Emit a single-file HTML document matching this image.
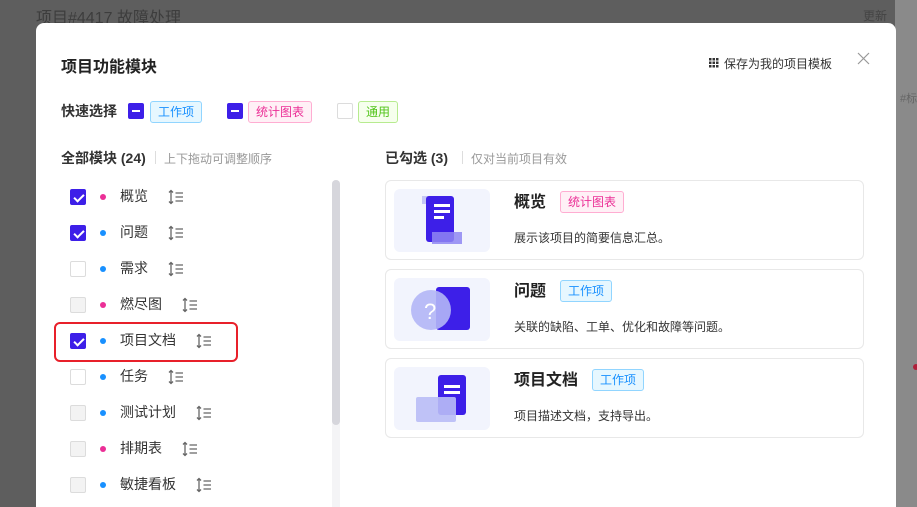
<!DOCTYPE html>
<html><head><meta charset="utf-8"><style>
*{box-sizing:border-box;margin:0;padding:0}
html,body{width:917px;height:507px;overflow:hidden}
body{background:#5e5e5e;font-family:"Liberation Sans","Noto Sans CJK SC",sans-serif;position:relative;color:#333}
.a{position:absolute;white-space:nowrap}
.modal{position:absolute;left:36px;top:23px;width:860px;height:484px;background:#fff;border-radius:8px 8px 0 0;overflow:hidden}
.cb{position:absolute;width:16px;height:16px;border-radius:2px;border:1px solid #dcdcdc;background:#fff}
.cb.on,.cb.ind{background:#3d1fe8;border-color:#3d1fe8}
.cb.dis{background:#f3f3f3}
.cb.on::after{content:"";position:absolute;left:5px;top:2px;width:4px;height:8px;border:solid #fff;border-width:0 2px 2px 0;transform:rotate(45deg)}
.cb.ind::after{content:"";position:absolute;left:3px;top:6px;width:8px;height:2px;background:#fff}
.tag{position:absolute;height:22px;line-height:20px;font-size:12px;padding:0 7px;border:1px solid;border-radius:3px}
.blue{background:#e6f7ff;border-color:#91d5ff;color:#1890ff}
.pink{background:#fff0f6;border-color:#ffadd2;color:#eb2f96}
.green{background:#f6ffed;border-color:#b7eb8f;color:#52c41a}
.row{position:absolute;left:0;height:36px;width:300px}
.dot{position:absolute;left:64px;top:15px;width:6px;height:6px;border-radius:50%}
.row .t{position:absolute;left:84px;top:7px;font-size:14px;color:#333}
.drag{position:absolute;top:10px}
.card{position:absolute;left:349px;width:479px;height:80px;border:1px solid #e8e8e8;border-radius:6px}
.img{position:absolute;left:8px;top:8px;width:96px;height:63px;background:#f2f4fd;border-radius:6px}
.ct{position:absolute;left:128px;top:7px;font-size:16px;font-weight:bold;color:#222}
.cd{position:absolute;left:128px;top:48px;font-size:12px;color:#333}
</style></head><body>
<svg width="0" height="0" style="position:absolute"><defs><g id="dr"><path d="M3 1.5V14.5M1 3.5L3 1.5L5 3.5M1 12.5L3 14.5L5 12.5" stroke="#666" stroke-width="1.3" fill="none"/><path d="M7.5 4H15M7.5 8H15M7.5 12H15" stroke="#666" stroke-width="1.3"/></g></defs></svg>
<div class="a" style="left:36px;top:4px;font-size:16px;color:#3d3d3d">项目#4417 故障处理</div>
<div style="position:absolute;left:895px;top:0;width:22px;height:507px;background:#8a8a8a"></div>
<div class="a" style="left:863px;top:7px;font-size:12px;color:#444">更新</div>
<div class="a" style="left:900px;top:90px;font-size:11px;color:#666">#标</div>
<div style="position:absolute;left:913px;top:364px;width:6px;height:6px;border-radius:50%;background:#b0203a"></div>

<div class="modal">
 <div class="a" style="left:25px;top:30px;font-size:16px;font-weight:bold;color:#222">项目功能模块</div>
 <svg style="position:absolute;left:673px;top:35px" width="10" height="10"><g fill="#333"><rect x="0" y="0" width="2.5" height="2.5"/><rect x="3.5" y="0" width="2.5" height="2.5"/><rect x="7" y="0" width="2.5" height="2.5"/><rect x="0" y="3.5" width="2.5" height="2.5"/><rect x="3.5" y="3.5" width="2.5" height="2.5"/><rect x="7" y="3.5" width="2.5" height="2.5"/><rect x="0" y="7" width="2.5" height="2.5"/><rect x="3.5" y="7" width="2.5" height="2.5"/><rect x="7" y="7" width="2.5" height="2.5"/></g></svg>
 <div class="a" style="left:688px;top:32px;font-size:12px;color:#333">保存为我的项目模板</div>
 <svg style="position:absolute;left:821px;top:29px" width="13" height="13"><path d="M1 1L12 12M12 1L1 12" stroke="#999" stroke-width="1.2"/></svg>

 <div class="a" style="left:25px;top:78px;font-size:14px;font-weight:bold;color:#333">快速选择</div>
 <div class="cb ind" style="left:92px;top:80px"></div>
 <div class="tag blue" style="left:114px;top:78px">工作项</div>
 <div class="cb ind" style="left:191px;top:80px"></div>
 <div class="tag pink" style="left:212px;top:78px">统计图表</div>
 <div class="cb" style="left:301px;top:80px"></div>
 <div class="tag green" style="left:322px;top:78px">通用</div>

 <div class="a" style="left:25px;top:125px;font-size:14px;color:#333;font-weight:bold">全部模块 (24)</div>
 <div style="position:absolute;left:119px;top:128px;width:1px;height:13px;background:#ddd"></div>
 <div class="a" style="left:128px;top:127px;font-size:12px;color:#999">上下拖动可调整顺序</div>

 <div style="position:absolute;left:18px;top:299px;width:184px;height:40px;border:2px solid #e8202a;border-radius:6px"></div>

 <div style="position:absolute;left:0;top:156px">
  <div class="row" style="top:0"><div class="cb on" style="left:34px;top:10px"></div><div class="dot" style="background:#eb2f96"></div><div class="t">概览</div><svg class="drag" style="left:132px" width="16" height="16"><use href="#dr"/></svg></div>
  <div class="row" style="top:36px"><div class="cb on" style="left:34px;top:10px"></div><div class="dot" style="background:#1890ff"></div><div class="t">问题</div><svg class="drag" style="left:132px" width="16" height="16"><use href="#dr"/></svg></div>
  <div class="row" style="top:72px"><div class="cb" style="left:34px;top:10px"></div><div class="dot" style="background:#1890ff"></div><div class="t">需求</div><svg class="drag" style="left:132px" width="16" height="16"><use href="#dr"/></svg></div>
  <div class="row" style="top:108px"><div class="cb dis" style="left:34px;top:10px"></div><div class="dot" style="background:#eb2f96"></div><div class="t">燃尽图</div><svg class="drag" style="left:146px" width="16" height="16"><use href="#dr"/></svg></div>
  <div class="row" style="top:144px"><div class="cb on" style="left:34px;top:10px"></div><div class="dot" style="background:#1890ff"></div><div class="t">项目文档</div><svg class="drag" style="left:160px" width="16" height="16"><use href="#dr"/></svg></div>
  <div class="row" style="top:180px"><div class="cb" style="left:34px;top:10px"></div><div class="dot" style="background:#1890ff"></div><div class="t">任务</div><svg class="drag" style="left:132px" width="16" height="16"><use href="#dr"/></svg></div>
  <div class="row" style="top:216px"><div class="cb dis" style="left:34px;top:10px"></div><div class="dot" style="background:#1890ff"></div><div class="t">测试计划</div><svg class="drag" style="left:160px" width="16" height="16"><use href="#dr"/></svg></div>
  <div class="row" style="top:252px"><div class="cb dis" style="left:34px;top:10px"></div><div class="dot" style="background:#eb2f96"></div><div class="t">排期表</div><svg class="drag" style="left:146px" width="16" height="16"><use href="#dr"/></svg></div>
  <div class="row" style="top:288px"><div class="cb dis" style="left:34px;top:10px"></div><div class="dot" style="background:#1890ff"></div><div class="t">敏捷看板</div><svg class="drag" style="left:160px" width="16" height="16"><use href="#dr"/></svg></div>
 </div>
 <div style="position:absolute;left:296px;top:157px;width:8px;height:340px;background:#f4f4f6;border-radius:4px"></div>
 <div style="position:absolute;left:296px;top:157px;width:8px;height:245px;background:#d6d6dc;border-radius:4px"></div>

 <div class="a" style="left:349px;top:125px;font-size:14px;color:#333;font-weight:bold">已勾选 (3)</div>
 <div style="position:absolute;left:426px;top:128px;width:1px;height:13px;background:#ddd"></div>
 <div class="a" style="left:435px;top:127px;font-size:12px;color:#999">仅对当前项目有效</div>

 <div class="card" style="top:157px">
  <div class="img"><svg width="96" height="63"><rect x="28" y="7" width="8" height="8" fill="#c5c6f5"/><rect x="32" y="7" width="28" height="46" rx="3" fill="#3d1fe8"/><rect x="40" y="15" width="16" height="3" fill="#fff"/><rect x="40" y="21" width="16" height="3" fill="#fff"/><rect x="40" y="27" width="10" height="3" fill="#fff"/><rect x="38" y="43" width="30" height="12" fill="#8f86f2" opacity=".85"/></svg></div>
  <div class="ct">概览</div><div class="tag pink" style="left:174px;top:10px">统计图表</div>
  <div class="cd">展示该项目的简要信息汇总。</div>
 </div>
 <div class="card" style="top:246px">
  <div class="img"><svg width="96" height="63"><rect x="42" y="9" width="34" height="43" rx="3" fill="#3d1fe8"/><circle cx="37" cy="32" r="20" fill="#b3b6f6" opacity=".9"/><text x="30" y="41" font-size="22" fill="#fff" font-family="Liberation Sans">?</text></svg></div>
  <div class="ct">问题</div><div class="tag blue" style="left:174px;top:10px">工作项</div>
  <div class="cd">关联的缺陷、工单、优化和故障等问题。</div>
 </div>
 <div class="card" style="top:335px">
  <div class="img"><svg width="96" height="63"><rect x="44" y="8" width="28" height="40" rx="3" fill="#3d1fe8"/><rect x="50" y="18" width="16" height="3" fill="#fff"/><rect x="50" y="24" width="16" height="3" fill="#fff"/><rect x="22" y="30" width="40" height="25" rx="2" fill="#b9bcf6" opacity=".9"/></svg></div>
  <div class="ct">项目文档</div><div class="tag blue" style="left:206px;top:10px">工作项</div>
  <div class="cd">项目描述文档，支持导出。</div>
 </div>
</div>
</body></html>
